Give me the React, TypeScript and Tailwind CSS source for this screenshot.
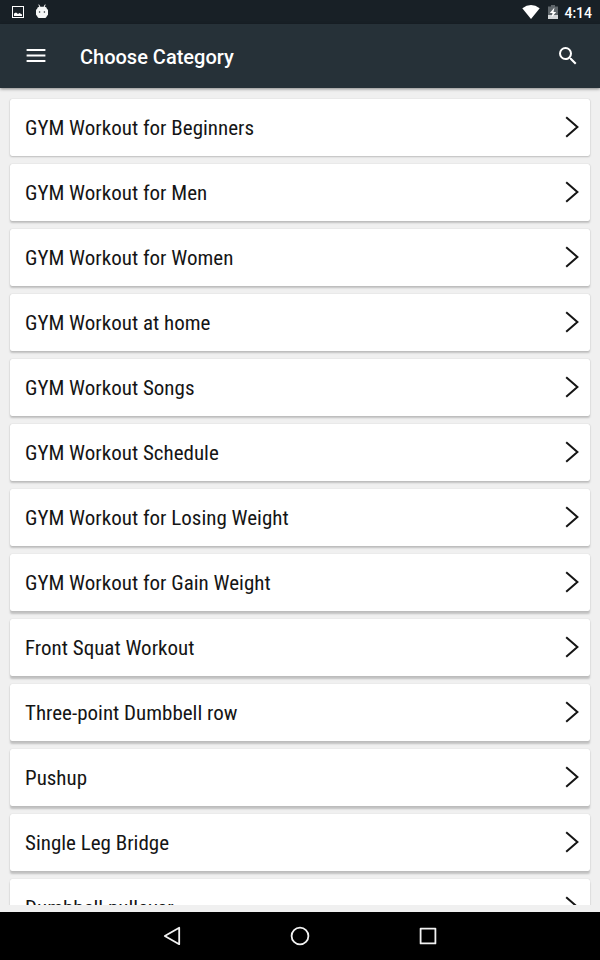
import { MdSearch } from "react-icons/md";

const categories = [
  "GYM Workout for Beginners",
  "GYM Workout for Men",
  "GYM Workout for Women",
  "GYM Workout at home",
  "GYM Workout Songs",
  "GYM Workout Schedule",
  "GYM Workout for Losing Weight",
  "GYM Workout for Gain Weight",
  "Front Squat Workout",
  "Three-point Dumbbell row",
  "Pushup",
  "Single Leg Bridge",
  "Dumbbell pullover",
];

// Card shadows get deeper further down the screen
const cardShadow = (index: number) => {
  const drop = 1 + index / 6;
  return `0 ${drop}px 2px rgba(0,0,0,0.2), 0 0 1px rgba(0,0,0,0.22)`;
};

function StatusBar() {
  return (
    <div className="flex h-6 shrink-0 items-center bg-[#182026] pl-3 pr-2 text-white">
      <svg className="h-3 w-3" viewBox="0 0 12 12" aria-hidden="true">
        <rect x="0.5" y="0.5" width="11" height="11" fill="none" stroke="#fff" />
        <path d="M2 10V7.5L4 6.5L6 8L7.5 7L10 8.5V10Z" fill="#fff" />
      </svg>
      <svg className="ml-3 h-4 w-3" viewBox="0 0 12 16" aria-hidden="true">
        <path d="M2.8 0.6L4 3.2M9.2 0.6L8 3.2" stroke="#fff" strokeWidth="1" />
        <path
          d="M3 2.8H9Q10.8 3 11 5Q12 5.3 12 6.5V10.5Q12 11.6 11 11.8Q10.8 13.4 9.4 14H2.6Q1.2 13.4 1 11.8Q0 11.6 0 10.5V6.5Q0 5.3 1 5Q1.2 3 3 2.8Z"
          fill="#f5f7f7"
        />
        <circle cx="3.6" cy="8" r="0.8" fill="#222b31" />
        <circle cx="8.4" cy="8" r="0.8" fill="#222b31" />
      </svg>
      <div className="ml-auto flex items-center">
        <svg className="h-4 w-[18px]" viewBox="0 0 18 16" aria-hidden="true">
          <path d="M0.3 4.3Q9 -2.2 17.7 4.3L9 15Z" fill="#fff" />
        </svg>
        <svg className="ml-2 h-4 w-2.5" viewBox="0 0 10 16" aria-hidden="true">
          <path d="M3 1H7V2.5H10V15H0V2.5H3Z" fill="#5f666b" />
          <path d="M0 11H10V15H0Z" fill="#d5d8da" />
          <path d="M6.5 3.5L1.8 9H4.5L3.5 13.5L8.2 8H5.5Z" fill="#fff" />
        </svg>
        <time className="ml-1.5 pt-px text-sm font-medium">4:14</time>
      </div>
    </div>
  );
}

function AppBar() {
  return (
    <header className="relative flex h-16 shrink-0 items-center bg-[#263138] px-5 text-white shadow-[0_1px_3px_rgba(0,0,0,0.45)]">
      <button type="button" aria-label="Open menu" className="flex h-8 w-8 items-center justify-center">
        <svg className="h-6 w-6" viewBox="0 0 24 24" aria-hidden="true">
          <path d="M2.6 6H21.4M2.6 11.5H21.4M2.6 17H21.4" stroke="#fff" strokeWidth="2" />
        </svg>
      </button>
      <h1 className="ml-7 pt-0.5 text-xl font-medium">Choose Category</h1>
      <button type="button" aria-label="Search" className="ml-auto flex h-6 w-6 items-center justify-center">
        <MdSearch className="h-6 w-6" />
      </button>
    </header>
  );
}

function NavBar() {
  return (
    <nav className="flex h-12 shrink-0 items-center justify-center gap-26 bg-black">
      <button type="button" aria-label="Back" className="h-6 w-6">
        <svg viewBox="0 0 24 24" fill="none" stroke="#f2f2f2" strokeWidth="1.8" strokeLinejoin="round" aria-hidden="true">
          <path d="M19.2 3.8V20.2L4.8 12Z" />
        </svg>
      </button>
      <button type="button" aria-label="Home" className="h-6 w-6">
        <svg viewBox="0 0 24 24" fill="none" stroke="#f2f2f2" strokeWidth="1.8" aria-hidden="true">
          <circle cx="12" cy="12" r="8.4" />
        </svg>
      </button>
      <button type="button" aria-label="Recent apps" className="h-6 w-6">
        <svg viewBox="0 0 24 24" fill="none" stroke="#f2f2f2" strokeWidth="1.8" strokeLinejoin="round" aria-hidden="true">
          <rect x="4.6" y="4.6" width="14.8" height="14.8" />
        </svg>
      </button>
    </nav>
  );
}

export default function App() {
  return (
    <div className="flex h-dvh flex-col bg-[#f0f0f0] font-['Roboto',sans-serif]">
      <StatusBar />
      <AppBar />
      <main className="mb-[7px] min-h-0 flex-1 overflow-hidden px-2.5 pt-[11px]">
        <ul className="flex flex-col gap-2">
          {categories.map((name, index) => (
            <li key={name}>
              <button
                type="button"
                style={{ boxShadow: cardShadow(index) }}
                className="flex h-[57px] w-full items-center justify-between rounded-xs bg-white pl-[15px] pr-[11px] text-left text-[#151515]"
              >
                <span className="pt-0.5 font-['Roboto_Condensed','Liberation_Sans_Narrow',sans-serif] text-[21px]">
                  {name}
                </span>
                <svg className="h-[23px] w-3.5" viewBox="0 0 14 23" fill="none" stroke="#151515" strokeWidth="2" aria-hidden="true">
                  <path d="M1.2 1.2L12.4 11L1.2 20.8" />
                </svg>
              </button>
            </li>
          ))}
        </ul>
      </main>
      <NavBar />
    </div>
  );
}
